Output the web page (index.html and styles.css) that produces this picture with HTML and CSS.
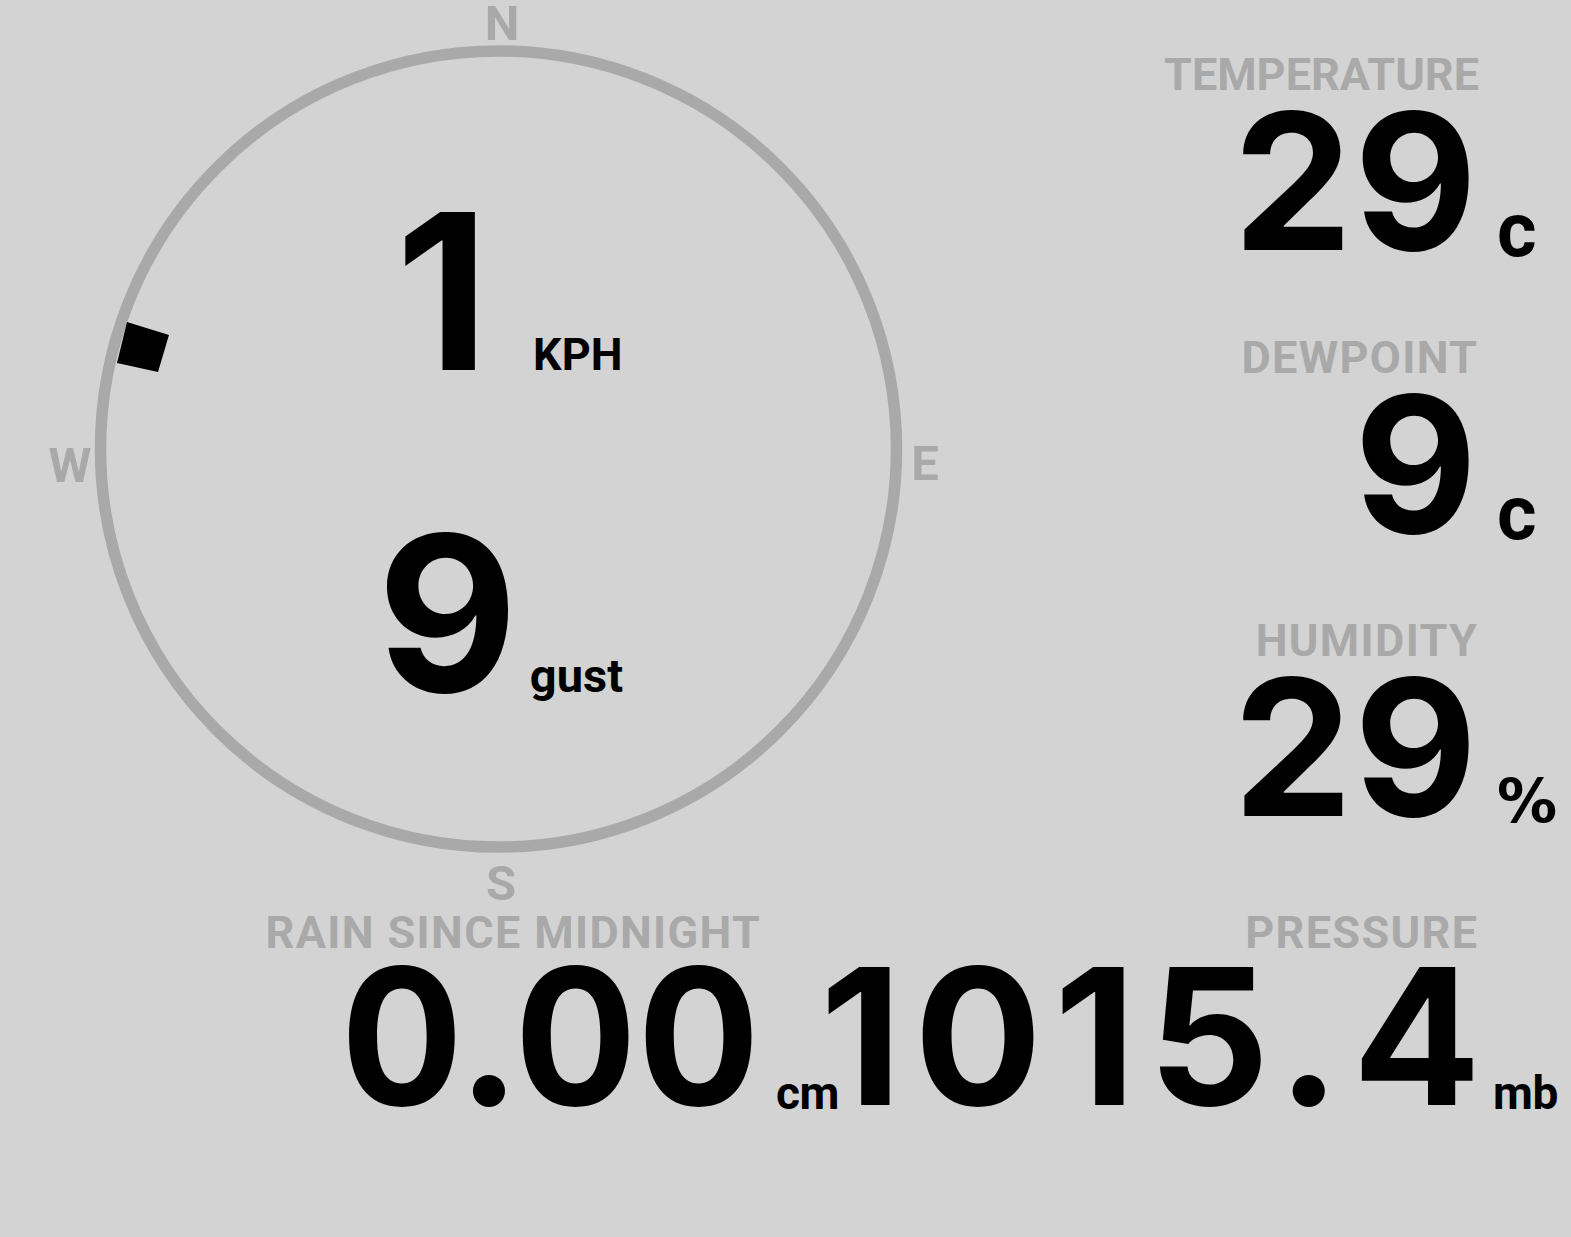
FILE: index.html
```html
<!DOCTYPE html>
<html lang="en">
<head>
  <meta charset="utf-8">
  <title>Weather Station</title>
  <link rel="stylesheet" href="styles.css">
</head>
<body>

  <div class="station">

    <!-- Wind compass -->
    <div class="compass">
      <svg class="dial" width="1000" height="910" viewBox="0 0 1000 910">
        <circle cx="498.5" cy="449" r="398" />
        <text x="502" y="40">N</text>
        <text x="925" y="480">E</text>
        <text x="501" y="900">S</text>
        <text x="70" y="482">W</text>
        <polygon class="vane" points="127,322 169,335 158,372 117,363" />
      </svg>
      <div class="wind-row speed">
        <span class="wind-value">1</span>
        <span class="wind-unit">KPH</span>
      </div>
      <div class="wind-row gust">
        <span class="wind-value">9</span>
        <span class="wind-unit">gust</span>
      </div>
    </div>

    <div class="readings">
      <div class="metric">
        <div class="label label-tight">TEMPERATURE</div>
        <div class="value">29</div>
        <div class="unit unit-lg">c</div>
      </div>
      <div class="metric">
        <div class="label">DEWPOINT</div>
        <div class="value">9</div>
        <div class="unit unit-lg">c</div>
      </div>
      <div class="metric">
        <div class="label">HUMIDITY</div>
        <div class="value">29</div>
        <div class="unit unit-pct">%</div>
      </div>
    </div>

    <div class="metric rain">
      <div class="label">RAIN SINCE MIDNIGHT</div>
      <div class="value">0.00</div>
      <div class="unit">cm</div>
    </div>

    <div class="metric pressure">
      <div class="label">PRESSURE</div>
      <div class="value">1015.4</div>
      <div class="unit">mb</div>
    </div>

  </div>

</body>
</html>
```

FILE: styles.css
```css
:root {
  --bg: #d3d3d3;
  --muted: #a9a9a9;
  --ink: #000;
  --digits: Inter, Roboto, sans-serif;
}

* {
  box-sizing: border-box;
}

body {
  margin: 0;
  background: var(--bg);
  color: var(--ink);
  font-family: Roboto, "Liberation Sans", sans-serif;
  font-weight: 700;
}

.station {
  display: grid;
  grid-template-columns: 854px 1fr;
  grid-template-rows: 910px auto;
}

/* compass */

.compass {
  position: relative;
  width: 1000px;
  height: 910px;
  padding-top: 202px;
}

.dial {
  position: absolute;
  top: 0;
  left: 0;
  overflow: visible;
}

.dial circle {
  fill: none;
  stroke: var(--muted);
  stroke-width: 11.5;
}

.dial text {
  fill: var(--muted);
  font-size: 49px;
  font-weight: 700;
  text-anchor: middle;
}

.dial .vane {
  fill: var(--ink);
}

.wind-row {
  position: relative;
  display: flex;
  justify-content: center;
  align-items: baseline;
}

.wind-row.speed {
  gap: 44px;
  padding-left: 18px;
}

.wind-row.gust {
  gap: 12px;
  margin-top: 143px;
}

.wind-value {
  font-family: var(--digits);
  font-size: 217px;
  line-height: 178px;
}

.wind-unit {
  font-size: 45px;
}

.gust .wind-unit {
  font-size: 47px;
}

/* readings */

.readings {
  display: flex;
  flex-direction: column;
  gap: 72px;
  padding-top: 52px;
}

.metric {
  display: grid;
  grid-template-columns: minmax(0, 1fr) 78px;
  column-gap: 16px;
}

.label {
  grid-column: 1;
  margin-right: -0.03em;
  text-align: right;
  color: var(--muted);
  font-size: 45px;
  line-height: 45px;
  letter-spacing: 0.03em;
  white-space: nowrap;
}

.label-tight {
  margin-right: -2px;
  letter-spacing: 0;
}

.value {
  grid-column: 1;
  grid-row: 2;
  margin-top: 3px;
  text-align: right;
  font-family: var(--digits);
  font-size: 190px;
  line-height: 163px;
  font-feature-settings: "tnum";
  white-space: nowrap;
}

.unit {
  grid-column: 2;
  grid-row: 2;
  align-self: end;
  font-size: 46px;
  line-height: 49px;
  letter-spacing: -0.01em;
  white-space: nowrap;
}

.unit-lg {
  padding-left: 4px;
  font-size: 76px;
  line-height: 65px;
  letter-spacing: 0;
}

.unit-pct {
  padding-left: 4px;
  font-family: "DejaVu Sans", sans-serif;
  font-size: 60px;
  line-height: 56px;
  letter-spacing: 0;
}

.rain .value {
  margin-top: 0;
}

.pressure {
  margin-left: -100px;
}

.pressure .value {
  margin-top: 0;
  margin-right: -16px;
  letter-spacing: 12px;
  font-feature-settings: normal;
}
```
